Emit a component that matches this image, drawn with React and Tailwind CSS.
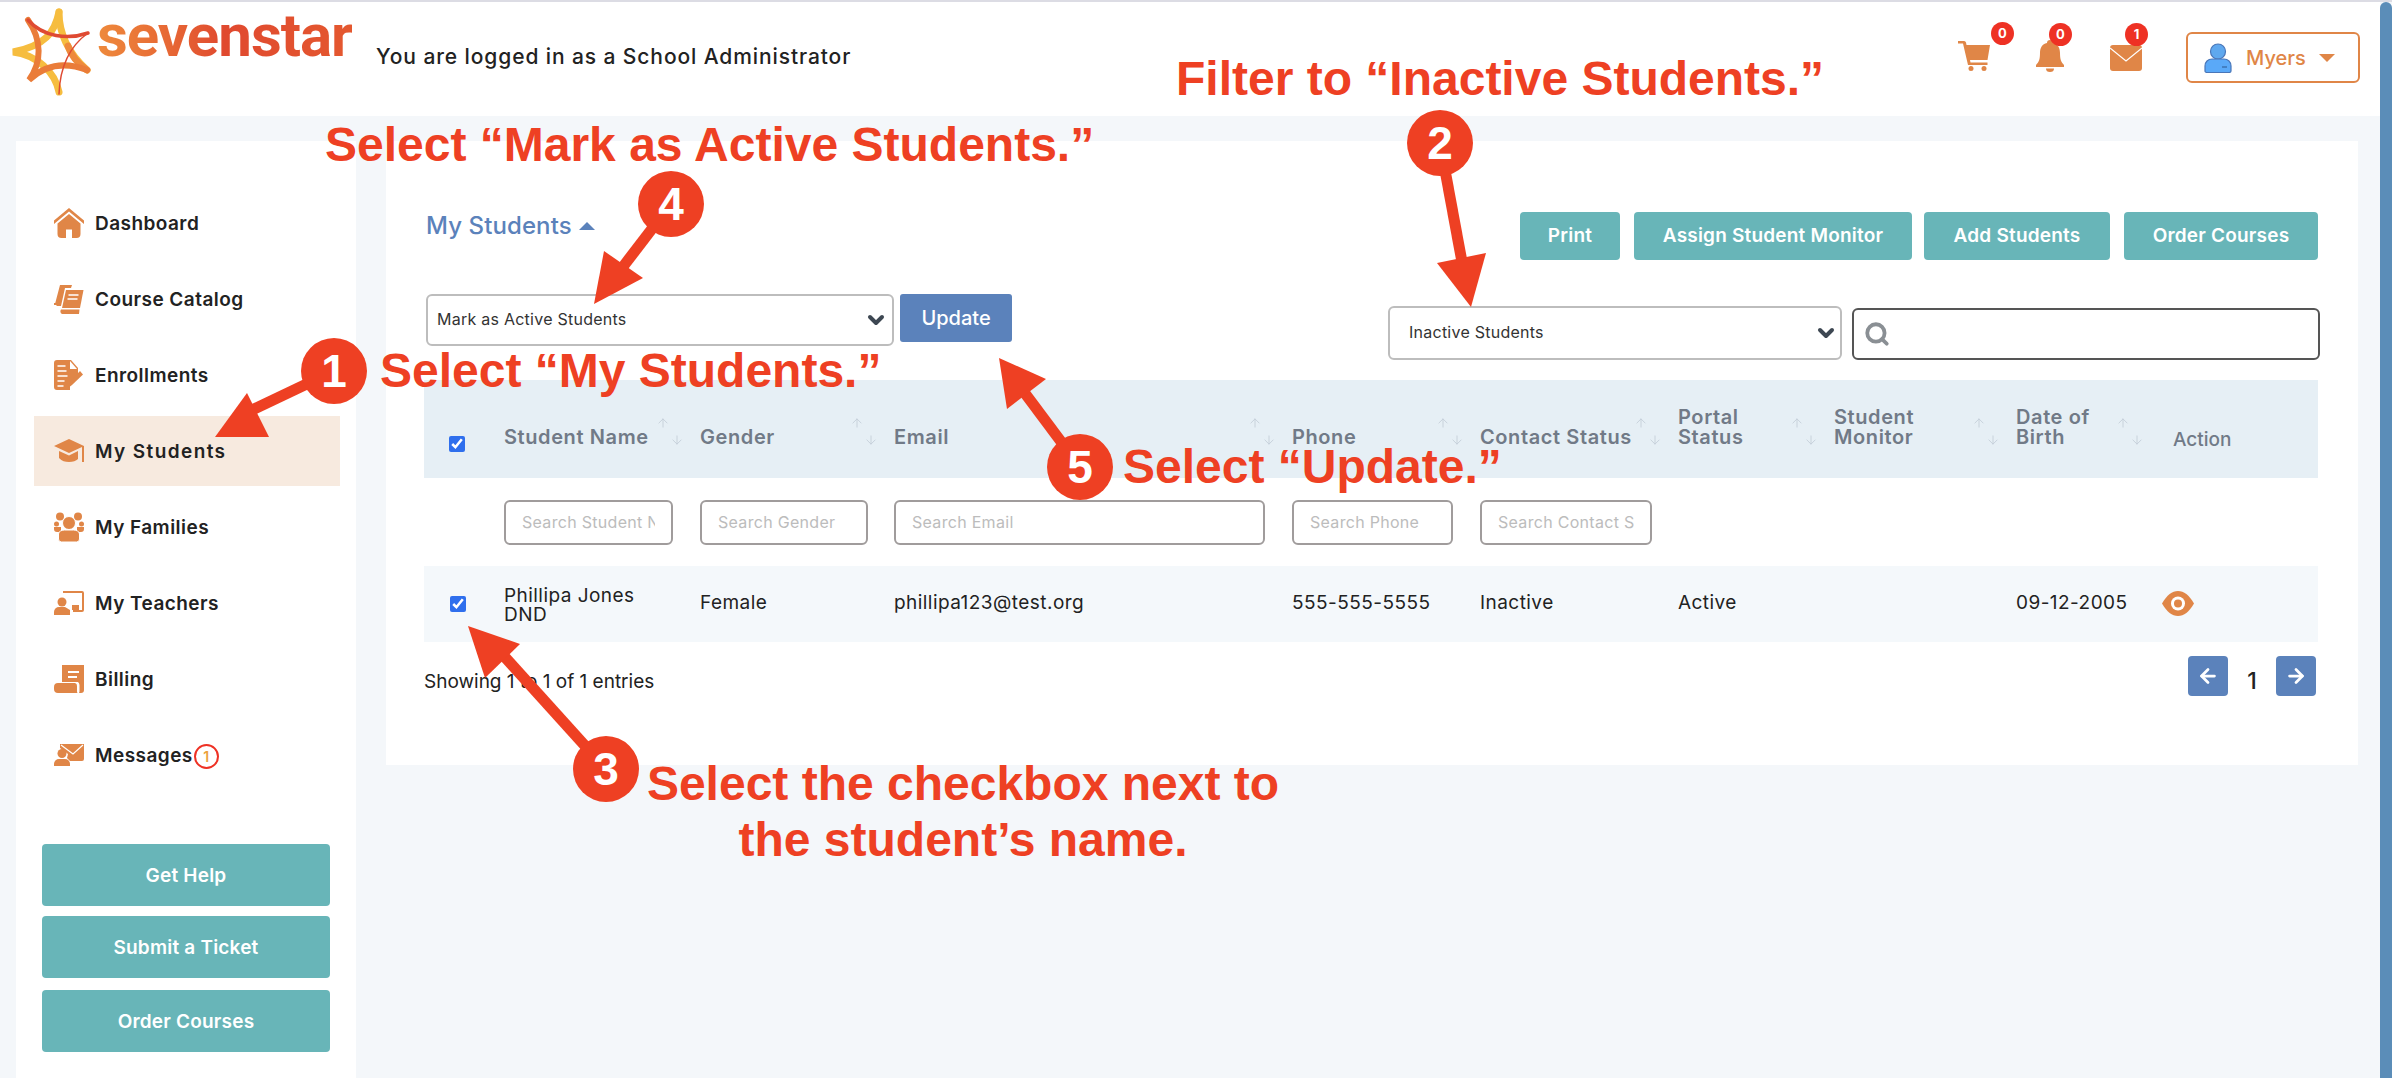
import React from "react";
import { ArrowUp, ArrowDown, ChevronDown, ArrowLeft, ArrowRight, Search } from "lucide-react";

const ORANGE = "#e08647";

function HomeIcon() {
  return (
    <svg viewBox="0 0 30 30" className="w-[30px] h-[30px]" fill={ORANGE}>
      <path d="M0 12.5 15 0l15 12.500V16L15 3.500 0 16z" />
      <path d="M3.500 15.500 15 6l11.500 9.500V26a4 4 0 0 1-4 4H18v-8.500h-6V30H7.500a4 4 0 0 1-4-4z" />
    </svg>
  );
}

function CatalogIcon() {
  return (
    <svg viewBox="0 0 30 30" className="w-[30px] h-[30px]" fill={ORANGE}>
      <path d="M6 1h12l-1 3H11L7 22H3L1 20z" />
      <path d="M0 19h4l-.5 2H0z" />
      <path d="M12 6h17.500l-3.500 18H8z" />
      <path d="M7 25.500h18.500L25 30H8a3 3 0 0 1-1-4.500z" />
      <path d="M14.500 11h10M13.500 15h10" stroke="#fff" strokeWidth="1.500" />
    </svg>
  );
}

function EnrollIcon() {
  return (
    <svg viewBox="0 0 30 30" className="w-[30px] h-[30px]" fill={ORANGE}>
      <path d="M3 0h14l7 8v6L16 24v6H3a3 3 0 0 1-3-3V3a3 3 0 0 1 3-3z" />
      <path d="M16 1v8h7z" fill="#fff" />
      <path d="M3.500 6h8M3.500 11h9M3.500 16h10M3.500 21h7M3.500 26h6" stroke="#fff" strokeWidth="1.600" />
      <path d="M14 28l1.500-6L26 11l3 3.500L18 25z" />
    </svg>
  );
}

function CapIcon() {
  return (
    <svg viewBox="0 0 30 24" className="w-[30px] h-[24px]" fill={ORANGE}>
      <path d="M15 0 0 7l15 7 13-6v5h2V7z" />
      <path d="M5 12v7c3 3 6 4 10 4s7-1 9-3v-8l-9 4.500z" />
      <rect x="28" y="8" width="2" height="15" />
    </svg>
  );
}

function FamilyIcon() {
  return (
    <svg viewBox="0 0 30 30" className="w-[30px] h-[30px]" fill={ORANGE}>
      <circle cx="6" cy="4.500" r="4" />
      <circle cx="24" cy="4.500" r="4" />
      <circle cx="2.500" cy="12" r="2.500" />
      <circle cx="27.500" cy="12" r="2.500" />
      <path d="M0 15h7v5H3a3 3 0 0 1-3-3zM23 15h7v2a3 3 0 0 1-3 3h-4z" />
      <circle cx="15" cy="11" r="6.500" stroke="#fff" strokeWidth="1" />
      <path d="M4.500 22a6 4 0 0 1 6-4h9a6 4 0 0 1 6 4v5a3 3 0 0 1-3 3h-15a3 3 0 0 1-3-3z" stroke="#fff" strokeWidth="1" />
    </svg>
  );
}

function TeacherIcon() {
  return (
    <svg viewBox="0 0 30 24" className="w-[30px] h-[24px]" fill={ORANGE}>
      <path d="M9 0h19a2 2 0 0 1 2 2v17a2 2 0 0 1-2 2h-9v-2h9V2H9z" />
      <path d="M18 14h7v5h-7z" />
      <circle cx="8" cy="11" r="4.500" />
      <path d="M0 24v-3a5 5 0 0 1 5-5h6l5 3v5z" />
    </svg>
  );
}

function BillingIcon() {
  return (
    <svg viewBox="0 0 30 28" className="w-[30px] h-[28px]" fill={ORANGE}>
      <path d="M8 0h22v25a3 3 0 0 1-3 3h-2a4 4 0 0 0 .5-2v-6a5 5 0 0 0-1.500-3H8z" />
      <path d="M14 7h11M14 12h9" stroke="#fff" strokeWidth="2" />
      <path d="M4 18h17a3 3 0 0 1 2 3v5a3 3 0 0 0 .5 2H4a4 4 0 0 1-4-4v-2a4 4 0 0 1 4-4z" />
    </svg>
  );
}

function MessageIcon() {
  return (
    <svg viewBox="0 0 30 22" className="w-[30px] h-[22px]" fill={ORANGE}>
      <path d="M6 0h24v15a2 2 0 0 1-2 2H16l-3-3 1-4-8-6z" />
      <path d="M7 1l12 9L29 1" fill="none" stroke="#fff" strokeWidth="1.200" />
      <circle cx="8" cy="9.500" r="4.500" />
      <path d="M0 22v-2a5 5 0 0 1 5-5h6a5 5 0 0 1 5 5v2z" />
    </svg>
  );
}

const menu = [
  { label: "Dashboard", icon: <HomeIcon /> },
  { label: "Course Catalog", icon: <CatalogIcon /> },
  { label: "Enrollments", icon: <EnrollIcon /> },
  { label: "My Students", icon: <CapIcon />, active: true },
  { label: "My Families", icon: <FamilyIcon /> },
  { label: "My Teachers", icon: <TeacherIcon /> },
  { label: "Billing", icon: <BillingIcon /> },
  { label: "Messages", icon: <MessageIcon />, count: 1 },
];

const columns = [
  { label: ["Student Name"], width: "w-[196px]", filter: "Search Student Name", input: "w-[169px]" },
  { label: ["Gender"], width: "w-[194px]", filter: "Search Gender", input: "w-[168px]" },
  { label: ["Email"], width: "w-[398px]", filter: "Search Email", input: "w-[371px]" },
  { label: ["Phone"], width: "w-[188px]", filter: "Search Phone", input: "w-[161px]" },
  { label: ["Contact Status"], width: "w-[198px]", filter: "Search Contact Status", input: "w-[172px]" },
  { label: ["Portal", "Status"], width: "w-[156px]" },
  { label: ["Student", "Monitor"], width: "w-[182px]" },
  { label: ["Date of", "Birth"], width: "w-[144px]" },
];

function Badge({ children, className }) {
  return (
    <span className={`absolute flex items-center justify-center w-[23px] h-[23px] rounded-full bg-[#ee3124] text-white text-[13px] font-bold ${className}`}>
      {children}
    </span>
  );
}

function Header() {
  return (
    <header className="h-[114px] bg-white flex items-start pl-[9px] pr-[20px]">
      <svg viewBox="0 0 84 92" className="w-[84px] h-[92px] mt-[6px] shrink-0" fill="none" strokeLinecap="round">
        <path d="M50 4C46 24 36 38 4 44c24 3 42 20 46 40" stroke="#f6bd3f" strokeWidth="7" />
        <path d="M50 4c0 20 8 40 28 58" stroke="#f6bd3f" strokeWidth="7" />
        <path d="M59 38c3 9 9 17 19 24" stroke="#ee8a3c" strokeWidth="7" />
        <path d="M19 12c14 20 14 42 1 60 17-16 37-18 58-10" stroke="#ea7c39" strokeWidth="6" />
        <path d="M19 12c15 17 40 20 60 13" stroke="#df4a32" strokeWidth="3.500" />
        <path d="M79 25C61 38 51 58 50 86" stroke="#df4a32" strokeWidth="1.500" />
      </svg>
      <span className="ml-[4px] mt-[2px] text-[60px] leading-[64px] font-bold tracking-[-1px] font-['Roboto',sans-serif] bg-gradient-to-r from-[#ee8a3c] via-[#e0492f] to-[#e4582f] bg-clip-text text-transparent">
        sevenstar
      </span>
      <p className="ml-6 mt-[41px] text-[21px] leading-7 tracking-[0.9px] font-medium text-[#222]">You are logged in as a School Administrator</p>

      <div className="ml-auto flex items-start">
        <div className="relative mt-[38px] mr-[46px]">
          <svg viewBox="0 0 32 31" className="w-8 h-[31px]" fill={ORANGE}>
            <path d="M0 1h6a2 2 0 0 1 2 1.500L8.500 5H32l-2.500 15H12l.500 2.500h17V25H10L5 3.500H0z" />
            <circle cx="13" cy="28.500" r="2.500" />
            <circle cx="26" cy="28.500" r="2.500" />
          </svg>
          <Badge className="-top-[18px] -right-[24px]">0</Badge>
        </div>
        <div className="relative mt-[38px] mr-[46px]">
          <svg viewBox="0 0 28 32" className="w-7 h-8" fill={ORANGE}>
            <path d="M14 0a3 3 0 0 1 3 3c5 1 7 5 7 10 0 6 1 9 4 12v2H0v-2c3-3 4-6 4-12 0-5 2-9 7-10a3 3 0 0 1 3-3z" />
            <path d="M10 28.500h8a4 3.500 0 0 1-8 0z" />
          </svg>
          <Badge className="-top-[17px] -right-[8px]">0</Badge>
        </div>
        <div className="relative mt-[43px] mr-[44px]">
          <svg viewBox="0 0 32 26" className="w-8 h-[26px]">
            <rect width="32" height="26" rx="3" fill={ORANGE} />
            <path d="M0 3l16 13L32 3" fill="none" stroke="#fff" strokeWidth="1.200" />
          </svg>
          <Badge className="-top-[22px] -right-[6px]">1</Badge>
        </div>
        <button className="mt-[30px] w-[174px] h-[51px] border-2 border-[#e08647] rounded-md flex items-center pl-[16px] text-[#e08647] text-[20px] font-medium">
          <svg viewBox="0 0 28 30" className="w-7 h-[30px]">
            <circle cx="14" cy="8.500" r="7.500" fill="#5fa8ee" stroke="#4a76b8" strokeWidth="1.200" />
            <path d="M1 28v-5c0-4 3-7 7-7h12c4 0 7 3 7 7v5c0 1-1 1.500-2 1.500H3c-1 0-2-.500-2-1.500z" fill="#5aa9f8" stroke="#4a76b8" strokeWidth="1.200" />
            <path d="M18 24h5" stroke="#35659f" strokeWidth="1.200" />
          </svg>
          <span className="ml-[14px]">Myers</span>
          <span className="ml-[13px] w-0 h-0 border-x-[8px] border-x-transparent border-t-[8px] border-t-[#e08647]" />
        </button>
      </div>
    </header>
  );
}

function Sidebar() {
  return (
    <aside className="w-[340px] h-[940px] shrink-0 bg-white pt-[47px]">
      <nav className="ml-[18px] mr-[16px] flex flex-col gap-[6px]">
        {menu.map((item) => (
          <a
            key={item.label}
            className={`h-[70px] pl-5 flex items-center gap-[11px] text-[19px] font-semibold text-[#222] ${item.active ? "bg-[#f7eadf] tracking-[1.400px]" : "tracking-[0.450px]"}`}
          >
            <span className="w-[30px] flex justify-center">{item.icon}</span>
            <span className="mt-[2px]">{item.label}</span>
            {item.count && (
              <span className="-ml-[10px] mt-[2px] w-[25px] h-[25px] rounded-full border-2 border-[#ee3124] text-[#eba23c] text-[14px] tracking-normal flex items-center justify-center">
                {item.count}
              </span>
            )}
          </a>
        ))}
      </nav>
      <div className="mt-[54px] mx-[26px] flex flex-col">
        <button className="h-[62px] pt-[2px] rounded-[4px] bg-[#68b5b8] text-white text-[19px] tracking-[0.200px] font-semibold">Get Help</button>
        <button className="mt-[10px] h-[62px] pt-[2px] rounded-[4px] bg-[#68b5b8] text-white text-[19px] tracking-[0.200px] font-semibold">Submit a Ticket</button>
        <button className="mt-[12px] h-[62px] pt-[2px] rounded-[4px] bg-[#68b5b8] text-white text-[19px] tracking-[0.200px] font-semibold">Order Courses</button>
      </div>
    </aside>
  );
}

function SelectBox({ value, className }) {
  return (
    <div className={`border-2 border-[#bdbdbd] rounded-md flex items-center justify-between bg-white text-[16px] tracking-[0.250px] text-[#333] ${className}`}>
      <span className="-mt-[2px]">{value}</span>
      <ChevronDown size={24} strokeWidth={4} className="text-[#3d4752]" />
    </div>
  );
}

function StudentsTable() {
  return (
    <table className="table-fixed w-[1894px] border-collapse">
      <colgroup>
        <col className="w-[80px]" />
        {columns.map((c) => (
          <col key={c.label[0] + c.label.length} className={c.width} />
        ))}
        <col className="w-[158px]" />
      </colgroup>
      <thead>
        <tr className="h-[98px] bg-[#e6eff5]">
          <th className="align-bottom pb-[26px] pl-[25px] text-left">
            <input type="checkbox" readOnly checked className="block w-4 h-4 accent-[#2f6fed]" />
          </th>
          {columns.map((c) => (
            <th key={c.label[0] + c.label.length} className="relative align-bottom pb-[31px] text-left text-[20px] leading-[20px] tracking-[0.600px] font-semibold text-[#717a87] whitespace-nowrap">
              {c.label.map((line) => (
                <div key={line}>{line}</div>
              ))}
              <ArrowUp size={14} strokeWidth={1.500} className="absolute right-[30px] top-[36px] text-[#c3ced8]" />
              <ArrowDown size={14} strokeWidth={1.500} className="absolute right-[16px] top-[53px] text-[#c3ced8]" />
            </th>
          ))}
          <th className="align-bottom pb-[28px] pl-[13px] text-left text-[19px] leading-[20px] font-medium text-[#717a87]">Action</th>
        </tr>
        <tr className="h-[88px]">
          <th />
          {columns.map((c) => (
            <th key={c.label[0] + c.label.length} className="text-left font-normal">
              {c.filter && (
                <input
                  placeholder={c.filter}
                  className={`block h-[45px] border-2 border-[#a09c9c] rounded-md px-4 text-[16px] tracking-[0.300px] outline-none placeholder:text-[#bcbcbc] ${c.input}`}
                />
              )}
            </th>
          ))}
          <th />
        </tr>
      </thead>
      <tbody>
        <tr className="h-[76px] bg-[#f4f8fb] text-[19px] tracking-[0.450px] text-[#222]">
          <td className="pl-[26px]">
            <input type="checkbox" readOnly checked className="block w-4 h-4 accent-[#2f6fed]" />
          </td>
          <td className="leading-[19px] pt-[1px]">Phillipa Jones<br />DND</td>
          <td className="pb-[2px]">Female</td>
          <td className="pb-[2px]">phillipa123@test.org</td>
          <td className="pb-[2px]">555-555-5555</td>
          <td className="pb-[2px]">Inactive</td>
          <td className="pb-[2px]">Active</td>
          <td />
          <td className="pb-[2px]">09-12-2005</td>
          <td className="pl-[2px]">
            <svg viewBox="0 0 32 25" className="w-8 h-[25px] -mt-[2px]">
              <path d="M0 12.500C5 4 10 0 16 0s11 4 16 12.500C27 21 22 25 16 25S5 21 0 12.500z" fill={ORANGE} />
              <circle cx="16" cy="12.500" r="7" fill="#fff" />
              <circle cx="16" cy="12.500" r="4" fill={ORANGE} />
            </svg>
          </td>
        </tr>
      </tbody>
    </table>
  );
}

function Annotations() {
  const arrows = [
    { from: [334, 371], to: [252, 410], head: "215,437 247,393 269,437" },
    { from: [1440, 143], to: [1462, 262], head: "1471,307 1437,263 1486,253" },
    { from: [606, 769], to: [503, 655], head: "468,626 520,644 485,678" },
    { from: [671, 204], to: [622, 268], head: "594,304 604,251 643,278" },
    { from: [1080, 467], to: [1024, 392], head: "999,358 1046,379 1007,409" },
  ];
  const dots = [
    { n: 1, x: 334, y: 371 },
    { n: 2, x: 1440, y: 143 },
    { n: 3, x: 606, y: 769 },
    { n: 4, x: 671, y: 204 },
    { n: 5, x: 1080, y: 467 },
  ];
  return (
    <div className="absolute inset-0 pointer-events-none font-['Liberation_Sans',Arial,sans-serif] font-bold text-[#ee4023]">
      <svg viewBox="0 0 2392 1078" className="absolute inset-0 w-[2392px] h-[1078px]">
        {arrows.map((a) => (
          <g key={a.head}>
            <line x1={a.from[0]} y1={a.from[1]} x2={a.to[0]} y2={a.to[1]} stroke="#ee4023" strokeWidth="11" />
            <polygon points={a.head} fill="#ee4023" />
          </g>
        ))}
        {dots.map((d) => (
          <g key={d.n}>
            <circle cx={d.x} cy={d.y} r="33" fill="#ee4023" />
            <text x={d.x} y={d.y + 16} textAnchor="middle" fill="#fff" fontSize="46" fontWeight="700" fontFamily="Liberation Sans">
              {d.n}
            </text>
          </g>
        ))}
      </svg>
      <div className="absolute left-[1176px] top-[52px] text-[48px] leading-[54px] whitespace-nowrap">Filter to “Inactive Students.”</div>
      <div className="absolute left-[325px] top-[118px] text-[48px] leading-[54px] whitespace-nowrap">Select “Mark as Active Students.”</div>
      <div className="absolute left-[380px] top-[344px] text-[48px] leading-[54px] whitespace-nowrap">Select “My Students.”</div>
      <div className="absolute left-[1123px] top-[440px] text-[48px] leading-[54px] whitespace-nowrap">Select “Update.”</div>
      <div className="absolute left-[563px] top-[756px] w-[800px] text-center text-[48px] leading-[56px]">
        Select the checkbox next to
        <br />
        the student’s name.
      </div>
    </div>
  );
}

export default function App() {
  return (
    <div className="relative w-[2392px] h-[1078px] overflow-hidden bg-[#f4f7fa] font-['Inter',sans-serif]">
      <div className="h-[2px] bg-[#dcdce4]" />
      <div className="flex h-[1076px]">
        <div className="flex-1 min-w-0">
          <Header />
          <div className="flex pl-4 pt-[25px] gap-[30px]">
            <Sidebar />
            <main className="w-[1972px] h-[624px] bg-white pl-[38px] pr-[40px]">
              <div className="h-[239px] flex justify-between">
                <div className="pl-[2px] pt-[70px]">
                  <div className="h-[30px] flex items-center text-[24px] tracking-[0.100px] font-medium text-[#5b82bb]">
                    My Students
                    <span className="ml-[7px] w-0 h-0 border-x-[8px] border-x-transparent border-b-[8px] border-b-[#5b82bb]" />
                  </div>
                  <div className="mt-[53px] flex gap-[6px]">
                    <SelectBox value="Mark as Active Students" className="w-[468px] h-[52px] pl-[9px] pr-[4px]" />
                    <button className="w-[112px] h-[48px] rounded-[3px] bg-[#5b82bb] text-white text-[20px] font-medium">Update</button>
                  </div>
                </div>
                <div className="pt-[71px] flex flex-col items-end">
                  <div className="flex">
                    <button className="w-[100px] h-[48px] rounded-[4px] bg-[#68b5b8] text-white text-[19px] tracking-[0.200px] font-semibold">Print</button>
                    <button className="ml-[14px] w-[278px] h-[48px] rounded-[4px] bg-[#68b5b8] text-white text-[19px] tracking-[0.200px] font-semibold">Assign Student Monitor</button>
                    <button className="ml-[12px] w-[186px] h-[48px] rounded-[4px] bg-[#68b5b8] text-white text-[19px] tracking-[0.200px] font-semibold">Add Students</button>
                    <button className="ml-[14px] w-[194px] h-[48px] rounded-[4px] bg-[#68b5b8] text-white text-[19px] tracking-[0.200px] font-semibold">Order Courses</button>
                  </div>
                  <div className="mt-[46px] -mr-[2px] flex items-end gap-[10px]">
                    <SelectBox value="Inactive Students" className="w-[454px] h-[54px] pl-[19px] pr-[2px]" />
                    <div className="w-[468px] h-[52px] border-2 border-[#555] rounded-md bg-white flex items-center pl-[10px]">
                      <Search size={26} strokeWidth={3.500} className="text-[#8a8f94]" />
                    </div>
                  </div>
                </div>
              </div>
              <StudentsTable />
              <div className="mt-[14px] flex justify-between">
                <p className="mt-[14px] text-[19px] leading-6 text-[#222]">Showing 1 to 1 of 1 entries</p>
                <div className="mr-[2px] flex items-start">
                  <button className="w-10 h-10 rounded-[4px] bg-[#5b82bb] flex items-center justify-center text-white">
                    <ArrowLeft size={22} strokeWidth={3} />
                  </button>
                  <span className="w-[48px] mt-[9px] text-center text-[23px] leading-8 font-medium text-[#222]">1</span>
                  <button className="w-10 h-10 rounded-[4px] bg-[#5b82bb] flex items-center justify-center text-white">
                    <ArrowRight size={22} strokeWidth={3} />
                  </button>
                </div>
              </div>
            </main>
          </div>
        </div>
        <div className="w-3 bg-[#5b8db8] rounded-t-md" />
      </div>
      <Annotations />
    </div>
  );
}
